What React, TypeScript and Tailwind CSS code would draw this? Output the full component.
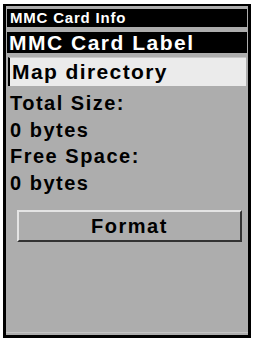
export default function App() {
  const font = { fontFamily: '"Liberation Sans", Arial, sans-serif' };
  return (
    <div className="w-[254px] h-[340px] bg-white pt-[4px] pl-[3px]" style={font}>
      <div className="w-[248px] h-[334px] border-t-2 border-l-[3px] border-r-[3px] border-b-[3px] border-black bg-[#adadad] flex flex-col pt-[3px]">
        <div className="h-[18px] bg-black text-white font-bold text-[15px] leading-[18px] tracking-[0.8px] pl-[3px] mx-[1px]">
          MMC Card Info
        </div>
        <div className="mt-[5px] h-[21px] bg-black text-white font-bold text-[21px] leading-[21px] tracking-[1.5px] pl-[2px] mx-[1px]">
          MMC Card Label
        </div>
        <div className="mt-[4px] mx-[2px] h-[29px] bg-[#ebebeb] border-l-2 border-black border-t border-t-[#c8c8c8] text-black font-bold text-[21px] leading-[27px] tracking-[1.4px] pl-[2px]">
          Map directory
        </div>
        <div className="mt-[4px] pl-[4px] text-black font-bold text-[20px] leading-[26.5px] tracking-[1.5px]">
          <div>Total Size:</div>
          <div>0 bytes</div>
          <div>Free Space:</div>
          <div>0 bytes</div>
        </div>
        <div className="mt-[14px] ml-[11px] w-[225px] h-[32px] border-t-2 border-l-2 border-t-[#e4e4e4] border-l-[#e4e4e4] border-b-2 border-r-2 border-b-[#333] border-r-[#333] flex items-center justify-center text-black font-bold text-[20px] tracking-[1.5px]">
          Format
        </div>
        <div className="flex-1" />
        <div className="h-[1px] bg-[#c4c4c4] mb-[2px]" />
      </div>
    </div>
  );
}
